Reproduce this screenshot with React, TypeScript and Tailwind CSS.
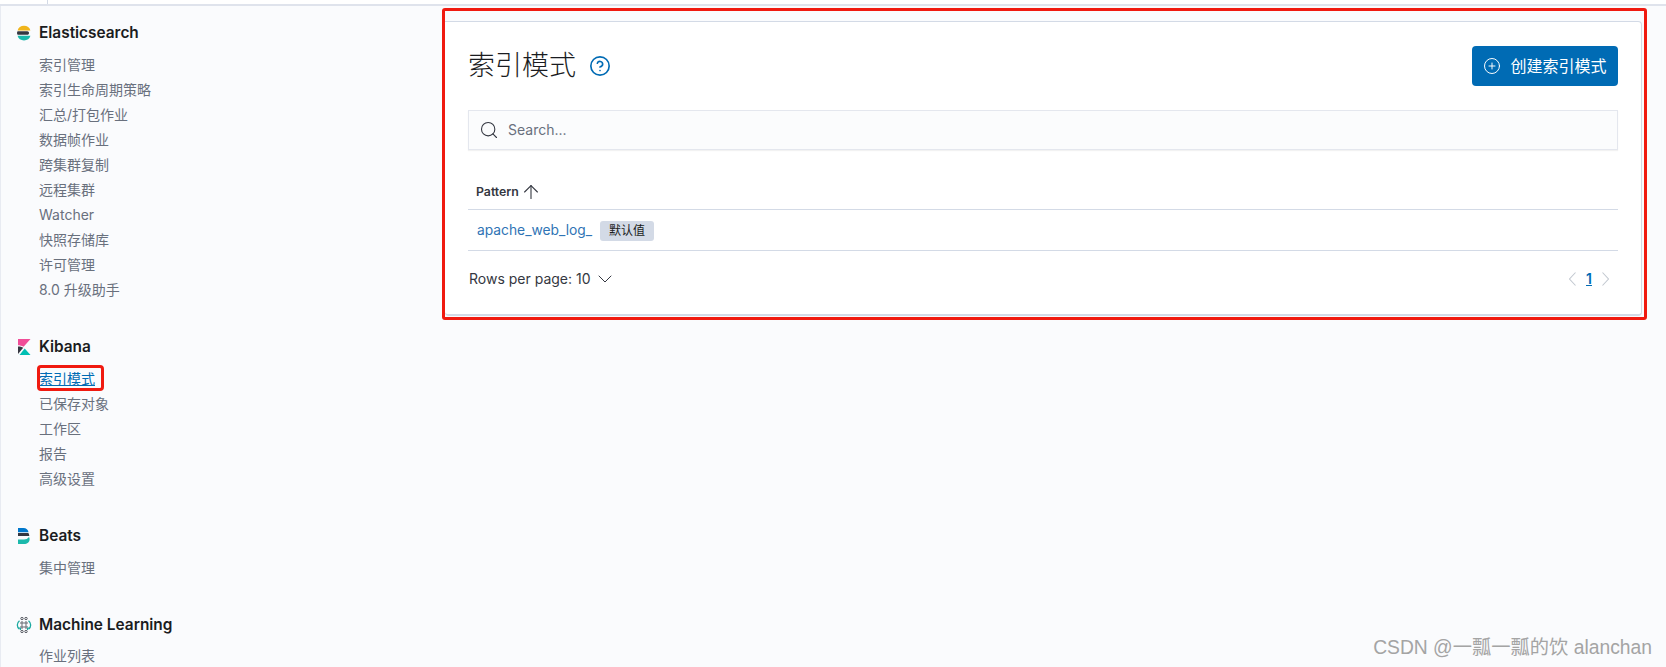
import React from "react";
import { ArrowUp, ChevronDown, CirclePlus, CircleHelp, Search } from "lucide-react";

const font = { fontFamily: 'Inter, "Noto Sans CJK SC", sans-serif' };

function EsLogo() {
  return (
    <svg width="16" height="16" viewBox="0 0 16 16">
      <path d="M1.600 5.400C2.200 2.600 4.800 .7 8 .7s5.800 1.900 6.400 4.700z" fill="#F0B51C" />
      <path d="M1.700 6.200h9.600c1 0 1.700.8 1.700 1.800s-.7 1.800-1.700 1.800H1.700C1.200 9.300 1 8.600 1 8s.2-1.300.7-1.800z" fill="#343741" />
      <path d="M1.600 10.700c.6 2.800 3.200 4.700 6.400 4.700s5.800-1.900 6.400-4.700z" fill="#1BB9AC" />
    </svg>
  );
}

function KibanaLogo() {
  return (
    <svg width="16" height="16" viewBox="0 0 16 16">
      <path d="M2 0h12.500L7.600 7.700C5.600 6.700 3.800 6.200 2 6.200z" fill="#F04E98" />
      <path d="M2 7.400c2 0 3.900.5 5.200 1.300L2 15z" fill="#343741" />
      <path d="M3.500 16l5.200-6.600L14.500 16z" fill="#00BFB3" />
    </svg>
  );
}

function BeatsLogo() {
  return (
    <svg width="16" height="16" viewBox="0 0 16 16">
      <path d="M2 0h5.500c2.800 0 4.600 1.700 5 4.200H2z" fill="#0077CC" />
      <path d="M2 5h10.400c.6.9.9 1.900.9 3H2z" fill="#343741" />
      <path d="M2 11.500h6c2 0 3.800-.8 5-2.500.4.600.6 1.400.6 2.200 0 2.800-2.300 4.800-5.600 4.800H2z" fill="#1BB9AC" />
    </svg>
  );
}

function MlLogo() {
  const dots = [
    [6, 1.5], [10, 1.5], [6, 6], [10, 6], [6, 10], [10, 10], [6, 14.5], [10, 14.5],
  ];
  return (
    <svg width="16" height="16" viewBox="0 0 16 16">
      {dots.map(([x, y], i) => (
        <circle key={i} cx={x} cy={y} r="1.200" fill="none" stroke="#343741" strokeWidth="0.800" />
      ))}
      <path d="M3.500 3.800C.6 6 .6 10 3.500 12.200" fill="none" stroke="#1BA9A0" strokeWidth="1.300" />
      <path d="M12.500 3.800C15.400 6 15.400 10 12.500 12.200" fill="none" stroke="#1BA9A0" strokeWidth="1.300" />
      <path d="M2.500 11h2v2" fill="none" stroke="#1BA9A0" strokeWidth="1" />
      <path d="M13.500 11h-2v2" fill="none" stroke="#1BA9A0" strokeWidth="1" />
    </svg>
  );
}

function NavSection({
  logo,
  title,
  items,
  active,
  className,
}: {
  logo: React.ReactNode;
  title: string;
  items: string[];
  active?: string;
  className?: string;
}) {
  return (
    <section className={className}>
      <div className="flex h-6 items-center gap-[7px] pl-[15px]">
        <span className="flex w-4 items-center justify-center">{logo}</span>
        <h2 className="text-[15.4px] font-semibold text-[#1a1c21]">{title}</h2>
      </div>
      <ul className="mt-[7px] pl-[38px]">
        {items.map((item) => (
          <li key={item} className="flex h-[25px] items-center text-sm text-[#69707d]">
            {item === active ? (
              <span className="mb-[2px] block h-[22px] rounded-[2px] pr-[7px] leading-[24px] outline-[3px] outline-offset-[-1px] outline-[#f01a10]">
                <a className="text-[#006bb4] underline">{item}</a>
              </span>
            ) : (
              item
            )}
          </li>
        ))}
      </ul>
    </section>
  );
}

function PagerArrow({ d }: { d: string }) {
  return (
    <svg width="7" height="14" viewBox="0 0 7 14" fill="none" stroke="#c2c8d0" strokeWidth="1.100">
      <path d={d} />
    </svg>
  );
}

export default function App() {
  return (
    <div className="relative h-[667px] overflow-hidden bg-[#fafbfd]" style={font}>
      <header className="h-[6px] border-b-2 border-[#dfe3ec] bg-white pl-[47px]">
        <div className="h-full w-px bg-[#d3dae6]" />
      </header>

      <div className="flex border-l border-[#e8ebf2]">
        <aside className="w-[441px] shrink-0 pt-[15px]">
          <NavSection
            logo={<EsLogo />}
            title="Elasticsearch"
            items={["索引管理", "索引生命周期策略", "汇总/打包作业", "数据帧作业", "跨集群复制", "远程集群", "Watcher", "快照存储库", "许可管理", "8.0 升级助手"]}
          />
          <NavSection
            className="mt-[33px]"
            logo={<KibanaLogo />}
            title="Kibana"
            active="索引模式"
            items={["索引模式", "已保存对象", "工作区", "报告", "高级设置"]}
          />
          <NavSection className="mt-[33px]" logo={<BeatsLogo />} title="Beats" items={["集中管理"]} />
          <NavSection className="mt-[33px] [&>ul]:mt-[6px]" logo={<MlLogo />} title="Machine Learning" items={["作业列表"]} />
        </aside>

        <div className="mt-[2px] h-[312px] w-[1205px] shrink-0 rounded-[3px] border-[3px] border-[#f01a10] pt-[10px] pr-[2px]">
          <main className="h-[295px] rounded-b-[4px] rounded-tr-[4px] border border-b-2 border-l-0 border-[#d3dae6] bg-white pt-6 pr-[23px] pl-[23px]">
            <div className="flex items-start justify-between">
              <div className="flex h-10 items-center gap-[13px]">
                <h1 className="text-[27px] font-light text-[#1a1c21]">索引模式</h1>
                <CircleHelp size={22} strokeWidth={1.8} className="text-[#006bb4]" />
              </div>
              <button className="flex h-10 w-[146px] items-center justify-center gap-[9px] rounded-[4px] bg-[#006bb4] text-base text-white">
                <CirclePlus size={18} strokeWidth={1.3} />
                创建索引模式
              </button>
            </div>

            <div className="mt-6 flex h-10 items-center gap-[9px] border border-[#e4e7ee] bg-[#fbfcfd] pl-[10px] shadow-[0_1px_1px_rgba(0,0,0,0.05)]">
              <Search size={20} strokeWidth={1.3} className="text-[#343741]" />
              <span className="text-sm text-[#69707d]">Search...</span>
            </div>

            <div className="mt-[21px] flex h-[39px] items-center gap-[1px] border-b border-[#d3dae6] pt-1 pl-2 text-[12.3px] font-semibold text-[#343741]">
              Pattern
              <ArrowUp size={22} strokeWidth={1.2} />
            </div>
            <div className="flex h-[41px] items-center gap-2 border-b border-[#d3dae6] pt-[1px] pl-[9px] text-[13.8px]">
              <a className="text-[#2f74b5]">apache_web_log_</a>
              <span className="flex h-5 w-[54px] items-center justify-center rounded-[3px] bg-[#d3dae6] text-xs text-[#1a1c21]">默认值</span>
            </div>

            <div className="flex h-14 items-center justify-between">
              <div className="flex items-center gap-[2px] pl-[1px] text-sm text-[#343741]">
                Rows per page: 10
                <ChevronDown size={24} strokeWidth={1} />
              </div>
              <div className="flex items-center gap-2 pr-[9px]">
                <PagerArrow d="M6.500 .5L.5 7l6 6.500" />
                <span className="w-[10px] text-center text-sm font-semibold text-[#006bb4] underline">1</span>
                <PagerArrow d="M.5 .5l6 6.500-6 6.500" />
              </div>
            </div>
          </main>
        </div>
      </div>

      <div
        className="absolute right-[14px] bottom-[4px] text-[19.3px] text-[#a4a4a4]"
        style={{ fontFamily: '"Liberation Sans", "Noto Sans CJK SC", sans-serif' }}
      >
        CSDN @一瓢一瓢的饮 alanchan
      </div>
    </div>
  );
}
